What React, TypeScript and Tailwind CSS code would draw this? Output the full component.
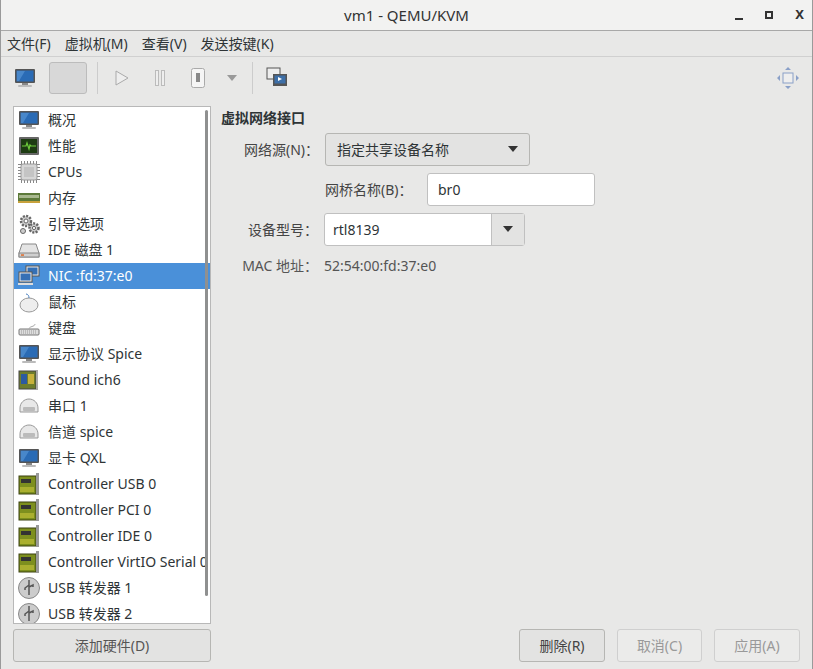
import React from "react";

const F = { fontFamily: '"Noto Sans","Noto Sans CJK SC",sans-serif' };

function Icon({ kind }: { kind: string }) {
  const s = { width: 24, height: 24 };
  switch (kind) {
    case "monitor":
      return (<svg {...s} viewBox="0 0 24 24"><rect x="2" y="3" width="20" height="14" rx="1" fill="#555"/><rect x="3.5" y="4.5" width="17" height="11" fill="#2a6bb5"/><path d="M4 5l8 0-6 10H4z" fill="#5d9ad8" opacity=".6"/><rect x="9" y="17" width="6" height="2" fill="#888"/><rect x="5" y="19" width="14" height="2" rx="1" fill="#bbb"/></svg>);
    case "perf":
      return (<svg {...s} viewBox="0 0 24 24"><rect x="2" y="3" width="20" height="18" rx="1" fill="#666"/><rect x="4" y="5" width="16" height="14" fill="#1d3b12"/><path d="M5 12h4l1-3 2 6 1-4 1 1h5" stroke="#6ecb3c" fill="none" strokeWidth="1.2"/></svg>);
    case "cpu":
      return (<svg {...s} viewBox="0 0 24 24"><g stroke="#888" strokeWidth="1">{[5,8,11,14,17,20].map(v=>(<g key={v}><line x1={v-0.5} y1="1" x2={v-0.5} y2="23"/><line x1="1" y1={v-0.5} x2="23" y2={v-0.5}/></g>))}</g><rect x="4" y="4" width="16" height="16" rx="2" fill="#d6d6d6" stroke="#999"/><rect x="7" y="7" width="10" height="10" fill="#c4c4c4"/></svg>);
    case "ram":
      return (<svg {...s} viewBox="0 0 24 24"><rect x="1" y="7" width="22" height="10" fill="#5d7a3a"/><rect x="2" y="9" width="20" height="3" fill="#a8b88e"/><rect x="1" y="15" width="22" height="2" fill="#c8a23c"/></svg>);
    case "gear":
      return (<svg {...s} viewBox="0 0 24 24"><circle cx="9" cy="9" r="5" fill="#ccc" stroke="#666" strokeDasharray="2 1.3" strokeWidth="2.5"/><circle cx="9" cy="9" r="2" fill="#fff" stroke="#666"/><circle cx="17" cy="16" r="4.5" fill="#ccc" stroke="#666" strokeDasharray="2 1.3" strokeWidth="2.5"/><circle cx="17" cy="16" r="1.6" fill="#fff" stroke="#666"/><circle cx="6" cy="19" r="2.5" fill="#ccc" stroke="#666"/></svg>);
    case "disk":
      return (<svg {...s} viewBox="0 0 24 24"><path d="M5 6h14l3 9v4H2v-4z" fill="#e4e4e4" stroke="#888"/><rect x="2" y="15" width="20" height="4" fill="#cfcfcf" stroke="#888"/><rect x="4" y="16.3" width="3" height="1.5" fill="#e06c2c"/></svg>);
    case "nic":
      return (<svg {...s} viewBox="0 0 24 24"><rect x="9" y="2" width="13" height="10" fill="#eee" stroke="#555"/><rect x="10.5" y="3.5" width="10" height="7" fill="#3570b5"/><rect x="2" y="8" width="13" height="10" fill="#eee" stroke="#555"/><rect x="3.5" y="9.5" width="10" height="7" fill="#3570b5"/><rect x="1" y="19" width="15" height="2" fill="#ddd"/></svg>);
    case "mouse":
      return (<svg {...s} viewBox="0 0 24 24"><ellipse cx="12" cy="15" rx="9" ry="7" fill="#eee" stroke="#999"/><path d="M9 4c2 0 3 2 3 4" stroke="#4a7fc0" fill="none"/></svg>);
    case "kbd":
      return (<svg {...s} viewBox="0 0 24 24"><rect x="2" y="13" width="20" height="6" rx="1" fill="#ddd" stroke="#777"/><path d="M4 15h16M4 17h16" stroke="#999" strokeDasharray="1 1"/><path d="M12 13c0-3 6-2 6-5" stroke="#aaa" fill="none"/></svg>);
    case "sound":
      return (<svg {...s} viewBox="0 0 24 24"><rect x="2" y="3" width="17" height="18" fill="#6e7d2c" stroke="#444"/><rect x="4" y="6" width="6" height="10" fill="#2c5aa0"/><rect x="11" y="6" width="6" height="10" fill="#c8b23c"/><rect x="19" y="2" width="2" height="20" fill="#aaa"/></svg>);
    case "serial":
      return (<svg {...s} viewBox="0 0 24 24"><path d="M3 14c0-5 4-9 9-9s9 4 9 9v4H3z" fill="#e8e8e8" stroke="#999"/><rect x="6" y="13" width="12" height="4" rx="1" fill="#bbb"/></svg>);
    case "ctrl":
      return (<svg {...s} viewBox="0 0 24 24"><rect x="2" y="4" width="17" height="18" fill="#7d8f1e" stroke="#3a4010"/><rect x="4" y="7" width="10" height="4" fill="#333"/><path d="M4 15v5M6 15v5M8 15v5M10 15v5M12 15v5M14 15v5M16 15v5" stroke="#d8d040"/><rect x="19" y="1" width="3" height="22" fill="#999"/></svg>);
    case "usb":
      return (<svg {...s} viewBox="0 0 24 24"><circle cx="12" cy="12" r="10.5" fill="#ccc" stroke="#888"/><path d="M12 4v15M12 9l-4 3v2M12 11l4-2v2" stroke="#555" strokeWidth="1.5" fill="none"/></svg>);
  }
  return null;
}

const items: [string, string][] = [
  ["monitor", "概况"], ["perf", "性能"], ["cpu", "CPUs"], ["ram", "内存"], ["gear", "引导选项"],
  ["disk", "IDE 磁盘 1"], ["nic", "NIC :fd:37:e0"], ["mouse", "鼠标"], ["kbd", "键盘"],
  ["monitor", "显示协议  Spice"], ["sound", "Sound ich6"], ["serial", "串口 1"], ["serial", "信道  spice"],
  ["monitor", "显卡  QXL"], ["ctrl", "Controller USB 0"], ["ctrl", "Controller PCI 0"], ["ctrl", "Controller IDE 0"],
  ["ctrl", "Controller VirtIO Serial 0"], ["usb", "USB 转发器 1"], ["usb", "USB 转发器 2"],
];

const Arrow = () => (<svg width="10" height="6" viewBox="0 0 10 6"><path d="M0 0h10L5 6z" fill="#333"/></svg>);

export default function App() {
  return (
    <div style={F} className="w-[813px] h-[669px] bg-[#e8e8e7] text-[14px] text-[#2e3436] overflow-hidden flex flex-col border-x border-[#9a9a9a]">
      <div className="h-[32px] bg-[#f2f2f1] border-b border-[#a8a8a8] flex items-center relative">
        <div className="flex-1 text-center text-[15px] text-[#333]">vm1 - QEMU/KVM</div>
        <div className="absolute right-[8px] top-0 h-full flex items-center gap-[22px] text-[13px] font-bold text-[#333]">
          <span className="w-[8px] h-[2px] bg-[#333] mt-[8px]"></span>
          <span className="w-[8px] h-[8px] border-2 border-[#333]"></span>
          <span>X</span>
        </div>
      </div>
      <div className="h-[27px] flex items-center gap-[14px] px-[6px] text-[14px] border-b border-[#d0d0d0]">
        <span>文件(F)</span><span>虚拟机(M)</span><span>查看(V)</span><span>发送按键(K)</span>
      </div>
      <div className="h-[44px] flex items-center px-[6px] gap-[2px]">
        <div className="w-[36px] h-[32px] flex items-center justify-center"><Icon kind="monitor" /></div>
        <div className="w-[28px] h-[32px] mx-[4px] bg-[#d8d8d8] border border-[#bcbcbc] rounded-[3px] flex items-center justify-center w-[28px] px-[18px]">
          <svg width="14" height="22" viewBox="0 0 14 22"><circle cx="7" cy="7" r="6" fill="#fff7c0" stroke="#aaa"/><rect x="4" y="13" width="6" height="6" fill="#777"/></svg>
        </div>
        <div className="w-px h-[32px] bg-[#ccc] mx-[4px]"></div>
        <div className="w-[36px] flex justify-center"><svg width="14" height="16" viewBox="0 0 14 16"><path d="M1 1l12 7-12 7z" fill="#eee" stroke="#aaa"/></svg></div>
        <div className="w-[36px] flex justify-center"><svg width="10" height="16" viewBox="0 0 10 16"><rect x="0.5" y="0.5" width="3" height="15" fill="#eee" stroke="#bbb"/><rect x="6.5" y="0.5" width="3" height="15" fill="#eee" stroke="#bbb"/></svg></div>
        <div className="w-[36px] flex justify-center"><svg width="14" height="20" viewBox="0 0 14 20"><rect x="0.5" y="0.5" width="13" height="19" rx="2" fill="#f5f5f5" stroke="#aaa"/><rect x="5" y="5" width="4" height="9" fill="#888"/></svg></div>
        <div className="w-[28px] flex justify-center"><svg width="10" height="6" viewBox="0 0 10 6"><path d="M0 0h10L5 6z" fill="#999"/></svg></div>
        <div className="w-px h-[32px] bg-[#ccc] mx-[4px]"></div>
        <div className="w-[36px] flex justify-center"><svg width="22" height="22" viewBox="0 0 22 22"><rect x="1" y="1" width="13" height="11" fill="#eee" stroke="#555"/><rect x="7" y="7" width="14" height="12" fill="#555"/><rect x="8.5" y="8.5" width="11" height="8" fill="#3d6fa8"/><path d="M12 10l4 2-4 2z" fill="#fff"/></svg></div>
        <div className="flex-1"></div>
        <svg width="24" height="24" viewBox="0 0 24 24" className="mr-[6px]"><rect x="7" y="7" width="10" height="10" fill="#eee" stroke="#8aa0c8"/><path d="M12 1l3 3H9zM12 23l3-3H9zM1 12l3 3V9zM23 12l-3 3V9z" fill="#8aa0c8"/></svg>
      </div>
      <div className="flex-1 flex px-[12px] pt-[7px] pb-[7px] gap-[10px]">
        <div className="w-[198px] flex flex-col gap-[5px]">
          <div className="h-[518px] bg-white border border-[#b8b8b8] relative overflow-hidden">
            {items.map(([k, t], i) => (
              <div key={i} className={`h-[26px] flex items-center gap-[7px] pl-[3px] whitespace-nowrap ${i === 6 ? "bg-[#4a90d9] text-white" : ""}`}>
                <Icon kind={k} /><span>{t}</span>
              </div>
            ))}
            <div className="absolute right-[2px] top-[3px] w-[3px] h-[486px] rounded bg-[#8f9090]"></div>
          </div>
          <div className="h-[33px] border border-[#b6b6b3] rounded-[3px] bg-[#e3e3e2] flex items-center justify-center text-[#555]">添加硬件(D)</div>
        </div>
        <div className="flex-1 flex flex-col">
          <div className="font-bold mt-[1px] h-[20px]">虚拟网络接口</div>
          <div className="flex flex-col pl-[15px] mt-[6px] gap-[7px]">
            <div className="flex items-center">
              <span className="w-[89px] text-right pr-[6px] text-[#444]">网络源(N)：</span>
              <div className="w-[205px] h-[33px] border border-[#b6b6b3] rounded-[3px] bg-[#e3e3e2] flex items-center justify-between px-[11px]">
                <span>指定共享设备名称</span><Arrow />
              </div>
            </div>
            <div className="flex items-center pl-[89px]">
              <span className="w-[102px] text-[#444]">网桥名称(B)：</span>
              <div className="w-[168px] h-[33px] border border-[#c0c0c0] rounded-[3px] bg-white flex items-center px-[10px]">br0</div>
            </div>
            <div className="flex items-center">
              <span className="w-[88px] text-right pr-[6px] text-[#444]">设备型号：</span>
              <div className="w-[201px] h-[33px] border border-[#c0c0c0] rounded-[3px] bg-white flex">
                <div className="flex-1 flex items-center px-[8px]">rtl8139</div>
                <div className="w-[33px] bg-[#e3e3e2] border-l border-[#c0c0c0] flex items-center justify-center"><Arrow /></div>
              </div>
            </div>
            <div className="flex items-center mt-[2px]">
              <span className="w-[88px] text-right pr-[6px] text-[#555]">MAC 地址：</span>
              <span className="text-[#555]">52:54:00:fd:37:e0</span>
            </div>
          </div>
          <div className="flex-1"></div>
          <div className="flex justify-end gap-[12px] pr-[0px]">
            <div className="w-[86px] h-[33px] border border-[#b6b6b3] rounded-[3px] bg-[#e3e3e2] flex items-center justify-center text-[#444]">删除(R)</div>
            <div className="w-[85px] h-[33px] border border-[#cfcfcf] rounded-[3px] bg-[#ebebea] flex items-center justify-center text-[#999]">取消(C)</div>
            <div className="w-[86px] h-[33px] border border-[#cfcfcf] rounded-[3px] bg-[#ebebea] flex items-center justify-center text-[#999]">应用(A)</div>
          </div>
        </div>
      </div>
    </div>
  );
}
